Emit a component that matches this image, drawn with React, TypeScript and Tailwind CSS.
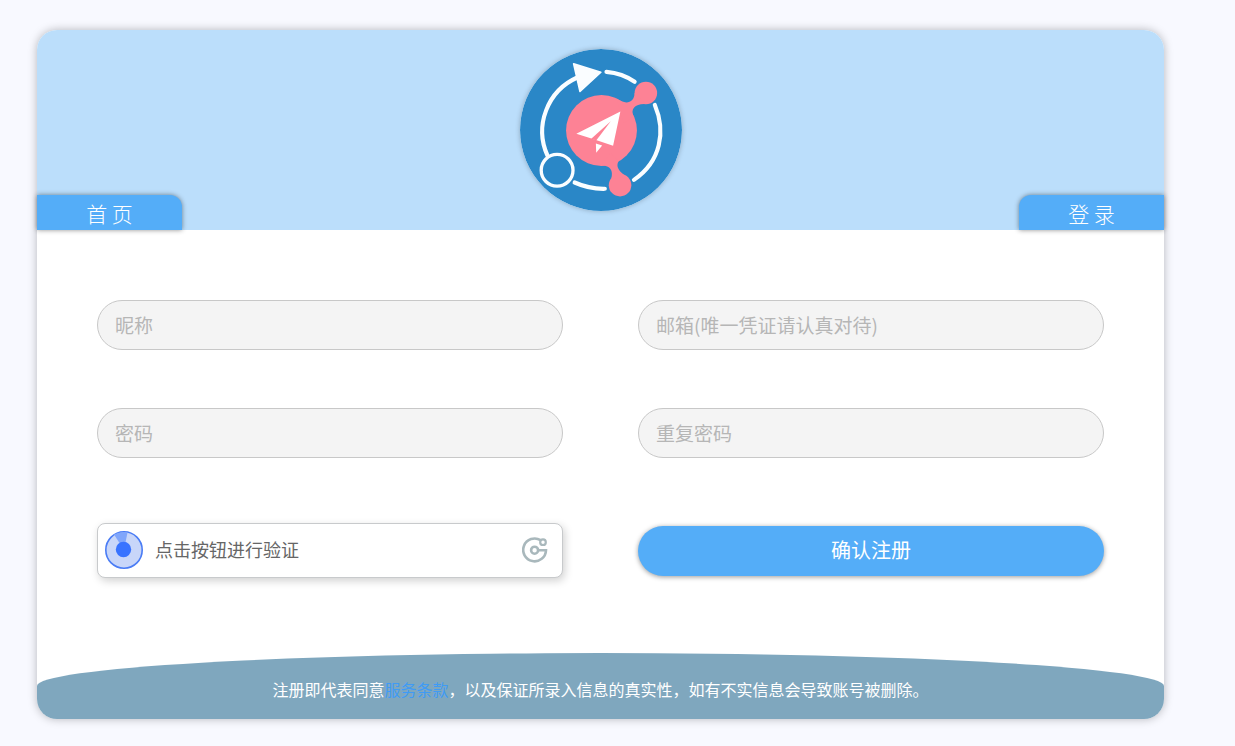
import type { InputHTMLAttributes } from "react";

function Logo() {
  return (
    <svg
      viewBox="27 26 489 489"
      className="size-[162px] rounded-full shadow-[0_0_5px_rgba(0,0,0,0.25)]"
      role="img"
      aria-label="Logo"
    >
      <circle cx="271.5" cy="270.5" r="244.5" fill="#2a87c7" />
      <g fill="none" stroke="#fafdff" strokeWidth="12.5" strokeLinecap="round">
        <path d="M110 348A178 178 0 0 1 200 112" />
        <path d="M288 95Q336 99 373 125" />
        <path d="M434 195C468 275 452 366 371 421" />
        <path d="M192 429Q236 449 283 448" />
        <circle cx="139" cy="392" r="48" strokeWidth="10" />
      </g>
      <path
        d="M189 71L271 96L208 154Z"
        fill="#fafdff"
        stroke="#fafdff"
        strokeWidth="5"
        strokeLinejoin="round"
      />
      <g fill="#fd8295">
        <circle cx="273" cy="272" r="107" />
        <circle cx="407" cy="159" r="34" />
        <circle cx="329" cy="437" r="34" />
        <path d="M318 175C345 196 372 190 373 158L407 192C376 190 359 205 370 230L340 250Z" />
        <path d="M270 378C298 376 309 391 303 416L354 414C324 397 315 379 325 364L300 340Z" />
      </g>
      <g fill="#fff">
        <path d="M330 215L197 282L245 297L308 318Z" />
        <path d="M301 244L242 297L257 302Z" fill="#fd8295" />
        <path d="M256 311L275 317L257 339Z" />
      </g>
    </svg>
  );
}

function Field({ label, ...rest }: { label: string } & InputHTMLAttributes<HTMLInputElement>) {
  return (
    <input
      aria-label={label}
      placeholder={label}
      className="h-[50px] w-full min-w-0 rounded-full border border-[#c8c8c8] bg-[#f4f4f4] px-[17px] pb-[2px] text-[19px] text-gray-700 outline-none placeholder:text-[#b6b6b6]"
      {...rest}
    />
  );
}

function RadarIcon() {
  return (
    <svg viewBox="0 0 38 38" className="size-[38px] shrink-0" aria-hidden="true">
      <circle cx="19" cy="19" r="18.2" fill="#c8d6f9" stroke="#4a7cf5" strokeWidth="1.6" />
      <path d="M19 19L9 3.6Q16 0 22.5 1.5Z" fill="#80a6fb" />
      <circle cx="18.5" cy="18.5" r="7.7" fill="#3873ff" />
    </svg>
  );
}

function CaptchaLogo() {
  return (
    <svg viewBox="0 0 26 26" className="size-[26px] shrink-0" aria-hidden="true">
      <g fill="none" stroke="#a9b8bc" strokeWidth="2.6">
        <path d="M18.6 3.2A11.4 11.4 0 1 0 24 13.2H15.5" />
        <circle cx="12.6" cy="13.2" r="3.5" />
        <circle cx="21" cy="5.2" r="2.8" strokeWidth="2.2" />
      </g>
    </svg>
  );
}

export default function App() {
  return (
    <div className="min-h-screen bg-[#f8f9ff] pt-[30px] pr-[71px] pb-[27px] pl-[37px] font-['Noto_Sans_CJK_SC',sans-serif] font-normal">
      <main className="rounded-[20px] bg-white shadow-[0_0_10px_rgba(0,0,0,0.27)]">
        <header className="flex h-[200px] items-end justify-between rounded-t-[20px] bg-[#bbdefb]">
          <a
            href="#home"
            className="flex h-[35px] w-[145px] items-center justify-center rounded-tr-[12px] bg-[#54adf8] pt-[2px] text-[21px] font-light text-white shadow-[0_0_5px_rgba(0,0,0,0.45)]"
          >
            首 页
          </a>
          <div className="self-start pt-[19px]">
            <Logo />
          </div>
          <a
            href="#login"
            className="flex h-[35px] w-[145px] items-center justify-center rounded-tl-[12px] bg-[#54adf8] pt-[2px] text-[21px] font-light text-white shadow-[0_0_5px_rgba(0,0,0,0.45)]"
          >
            登 录
          </a>
        </header>

        <form className="px-[60px] pt-[70px] pb-[75px]" onSubmit={(e) => e.preventDefault()}>
          <div className="grid grid-cols-2 gap-x-[75px] gap-y-[58px]">
            <Field label="昵称" type="text" />
            <Field label="邮箱(唯一凭证请认真对待)" type="email" />
            <Field label="密码" type="password" />
            <Field label="重复密码" type="password" />
          </div>
          <div className="mt-[65px] grid grid-cols-2 items-center gap-x-[75px]">
            <button
              type="button"
              className="flex h-[55px] items-center rounded-lg border border-[#c8cacc] bg-white pr-[14px] pb-[2px] pl-[7px] text-[18px] text-[#666] shadow-[2px_3px_8px_rgba(0,0,0,0.18)]"
            >
              <RadarIcon />
              <span className="ml-3 flex-1 text-left">点击按钮进行验证</span>
              <CaptchaLogo />
            </button>
            <button
              type="submit"
              className="h-[50px] rounded-full bg-[#54adf8] pb-[2px] text-[20px] text-white shadow-[0_1px_5px_rgba(0,0,0,0.4)]"
            >
              确认注册
            </button>
          </div>
        </form>

        <footer className="flex min-h-[66px] items-center justify-center rounded-t-[50%] rounded-b-[20px] bg-[#7fa7be] pt-[6px] text-base text-white">
          <p>
            注册即代表同意
            <a href="#terms" className="text-[#3f9bf5]">
              服务条款
            </a>
            ，以及保证所录入信息的真实性，如有不实信息会导致账号被删除。
          </p>
        </footer>
      </main>
    </div>
  );
}
